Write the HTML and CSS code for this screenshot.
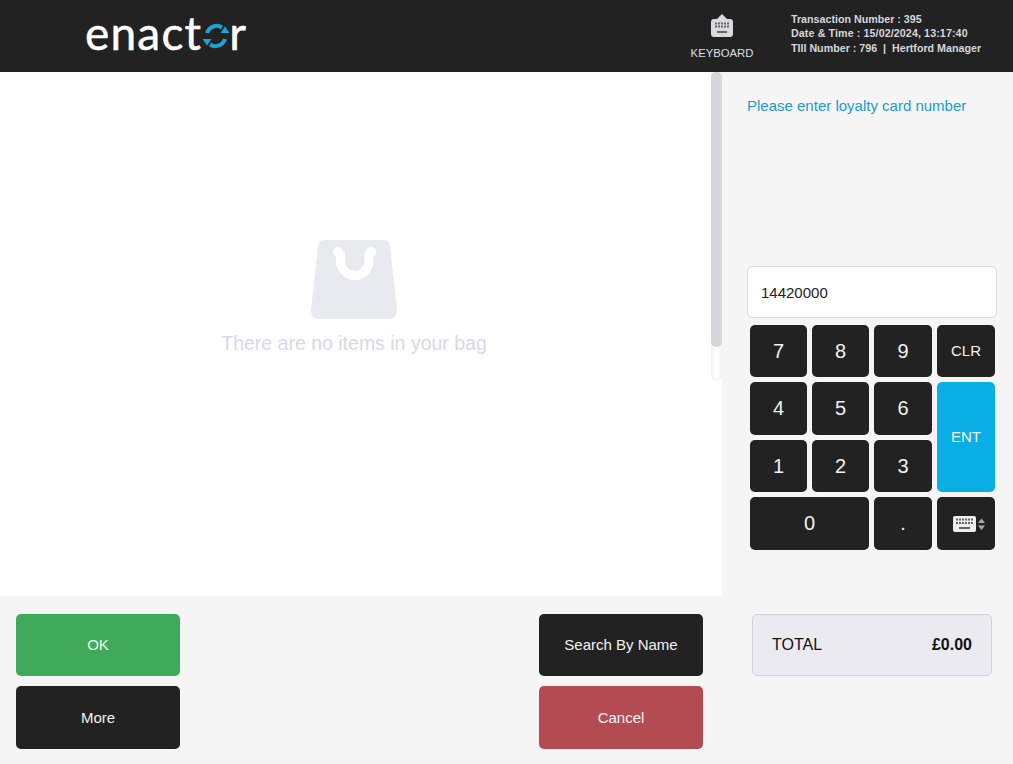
FILE: index.html
```html
<!DOCTYPE html>
<html lang="en">
<head>
    <meta charset="UTF-8">
    <meta name="viewport" content="width=device-width, initial-scale=1.0">
    <title>Enactor POS</title>
    <link rel="stylesheet" href="styles.css">
</head>
<body>
    <!-- Header -->
    <header class="header">
        <div class="logo">
            <span>enact</span>
            <svg class="logo-o" viewBox="0 0 28 28" width="28" height="28">
                <path d="M5 11A10 10 0 0 1 20 5.500" fill="none" stroke="#1ea3d6" stroke-width="4"/>
                <path d="M23 17A10 10 0 0 1 8 22.500" fill="none" stroke="#1ea3d6" stroke-width="4"/>
                <path d="M18.500 11h9l-4.500-6.500z" fill="#1ea3d6"/>
                <path d="M0.500 17h9l-4.500 6.500z" fill="#1ea3d6"/>
            </svg>
            <span>r</span>
        </div>
        <div class="keyboard-link">
            <svg viewBox="0 0 22 24" width="22" height="24">
                <path d="M11 0l5 5H6z" fill="#d9d9e2"/>
                <rect y="5" width="22" height="18" rx="3" fill="#d9d9e2"/>
                <path d="M4 9.500h14M4 12.500h14" stroke="#666" stroke-width="2" stroke-dasharray="2 1"/>
                <rect x="6" y="17" width="10" height="2" fill="#666"/>
            </svg>
            <span>KEYBOARD</span>
        </div>
        <div class="trans-info">
            <div>Transaction Number : 395</div>
            <div class="trans-date">Date &amp; Time : 15/02/2024, 13:17:40</div>
            <div>TIll Number : 796 &nbsp;|&nbsp; Hertford Manager</div>
        </div>
    </header>

    <div class="main">
        <!-- Basket -->
        <section class="basket">
            <svg class="bag" viewBox="0 0 86 79" width="86" height="79">
                <path d="M13 0H73Q78 0 79 6L86 70Q86 79 78 79H8Q0 79 0 70L7 6Q8 0 13 0Z" fill="#e9e9f0"/>
                <path d="M29.500 12V21a14.250 14.500 0 0 0 28.500 0V12" fill="none" stroke="#fff" stroke-width="9"/>
                <circle cx="27" cy="12" r="5" fill="#fff"/>
                <circle cx="60" cy="12" r="5" fill="#fff"/>
            </svg>
            <p class="empty-text">There are no items in your bag</p>
            <div class="scroll-track"><div class="scroll-thumb"></div></div>
        </section>

        <!-- Prompt and keypad -->
        <aside class="side">
            <p class="prompt">Please enter loyalty card number</p>
            <div class="entry">14420000</div>
            <div class="keypad">
                <button class="key">7</button>
                <button class="key">8</button>
                <button class="key">9</button>
                <button class="key key-small">CLR</button>
                <button class="key">4</button>
                <button class="key">5</button>
                <button class="key">6</button>
                <button class="key key-small key-ent">ENT</button>
                <button class="key">1</button>
                <button class="key">2</button>
                <button class="key">3</button>
                <button class="key key-zero">0</button>
                <button class="key">.</button>
                <button class="key">
                    <svg viewBox="0 0 38 18" width="38" height="18">
                        <rect x="6" y="1" width="23" height="16" rx="2" fill="#eee"/>
                        <path d="M9 4.500h17M9 8h17" stroke="#666" stroke-width="2" stroke-dasharray="2 1"/>
                        <rect x="12" y="12" width="11" height="2" fill="#666"/>
                        <path d="M34.500 3.500l3.500 4.500h-7zM34.500 15l3.500-4.500h-7z" fill="#aaa"/>
                    </svg>
                </button>
            </div>
        </aside>
    </div>

    <!-- Bottom buttons -->
    <footer class="footer">
        <div class="actions">
            <div class="action-col">
                <button class="action action-top action-ok">OK</button>
                <button class="action action-dark">More</button>
            </div>
            <div class="action-col">
                <button class="action action-top action-dark">Search By Name</button>
                <button class="action action-cancel">Cancel</button>
            </div>
        </div>
        <div class="total-wrap">
            <div class="total">
                <span>TOTAL</span>
                <strong>£0.00</strong>
            </div>
        </div>
    </footer>
</body>
</html>
```
FILE: styles.css
```css
* {
    box-sizing: border-box;
}
body {
    margin: 0;
    height: 764px;
    overflow: hidden;
    background: #f5f5f5;
    font-family: "Liberation Sans", Arial, sans-serif;
    display: flex;
    flex-direction: column;
}
button {
    font-family: inherit;
    border: none;
    cursor: pointer;
}

.header {
    height: 72px;
    background: #222;
    display: flex;
    align-items: center;
    color: #dcdce4;
}
.logo {
    margin-left: 85px;
    width: 590px;
    display: flex;
    align-items: center;
    color: #fff;
    font-family: "Lato", sans-serif;
    font-size: 46px;
    letter-spacing: 1.2px;
    line-height: 1;
    padding-bottom: 7px;
    -webkit-text-stroke: 0.5px #fff;
}
.logo-o {
    margin: 6px -1px 0 0;
}
.keyboard-link {
    width: 94px;
    display: flex;
    flex-direction: column;
    align-items: center;
    gap: 9px;
    font-size: 11.300px;
    padding-top: 1px;
}
.trans-info {
    margin-left: 22px;
    font-size: 10.700px;
    font-weight: 700;
    line-height: 14.500px;
    color: #d6d6de;
    padding-bottom: 5px;
}
.trans-date {
    letter-spacing: 0.1px;
}

.main {
    height: 524px;
    display: flex;
}
.basket {
    position: relative;
    width: 722px;
    background: #fff;
    display: flex;
    flex-direction: column;
    align-items: center;
    padding: 168px 14px 0 0;
}
.bag {
    display: block;
}
.empty-text {
    margin: 13px 0 0;
    font-size: 19.500px;
    color: #d8d8e8;
}
.scroll-track {
    position: absolute;
    top: 0;
    right: 0;
    width: 11px;
    height: 308px;
    background: linear-gradient(90deg, #f1f1f1, #fff 40%, #fff 60%, #f1f1f1);
    border-bottom: 1px solid #f1f1f1;
    border-radius: 0 0 5px 5px;
}
.scroll-thumb {
    height: 275px;
    background: #d6d6dc;
    border-radius: 5px;
}

.side {
    width: 291px;
    padding: 25px 16px 0 25px;
}
.prompt {
    margin: 0;
    font-size: 15px;
    line-height: 18px;
    color: #1f9bcf;
}
.entry {
    margin-top: 151px;
    height: 52px;
    padding: 0 0 0 13px;
    display: flex;
    align-items: center;
    background: #fff;
    border: 1px solid #dcdce4;
    border-radius: 5px;
    font-size: 15px;
    color: #222;
}
.keypad {
    margin: 7px 0 0 3px;
    display: grid;
    grid-template-columns: 57px 57px 58px 58px;
    grid-template-rows: 52px 53px 52px 53px;
    gap: 5px;
}
.key {
    background: #222;
    color: #f2f2f2;
    border-radius: 5px;
    font-size: 20px;
    display: flex;
    align-items: center;
    justify-content: center;
    padding: 0;
}
.key-small {
    font-size: 15px;
    padding-bottom: 2px;
}
.key-ent {
    grid-column: 4;
    grid-row: 2 / span 2;
    background: #08aee4;
}
.key-zero {
    grid-column: 1 / span 2;
}

.footer {
    flex: 1;
    display: flex;
    padding-top: 18px;
}
.actions {
    width: 722px;
    padding: 0 19px 0 16px;
    display: flex;
    justify-content: space-between;
}
.action-col {
    display: grid;
    grid-template-rows: 62px 63px;
    row-gap: 10px;
}
.action {
    width: 164px;
    border-radius: 5px;
    color: #f2f2f2;
    font-size: 15px;
    padding: 0;
}
.action-top {
    padding-bottom: 2px;
}
.action-ok {
    background: #3fab5a;
}
.action-dark {
    background: #222;
}
.action-cancel {
    background: #b44b52;
}
.total-wrap {
    padding-left: 30px;
}
.total {
    width: 240px;
    height: 62px;
    padding: 0 19px 0 19px;
    display: flex;
    align-items: center;
    justify-content: space-between;
    background: #eaeaf0;
    border: 1px solid #d2d2de;
    border-radius: 5px;
    font-size: 16px;
    color: #111;
}
```
